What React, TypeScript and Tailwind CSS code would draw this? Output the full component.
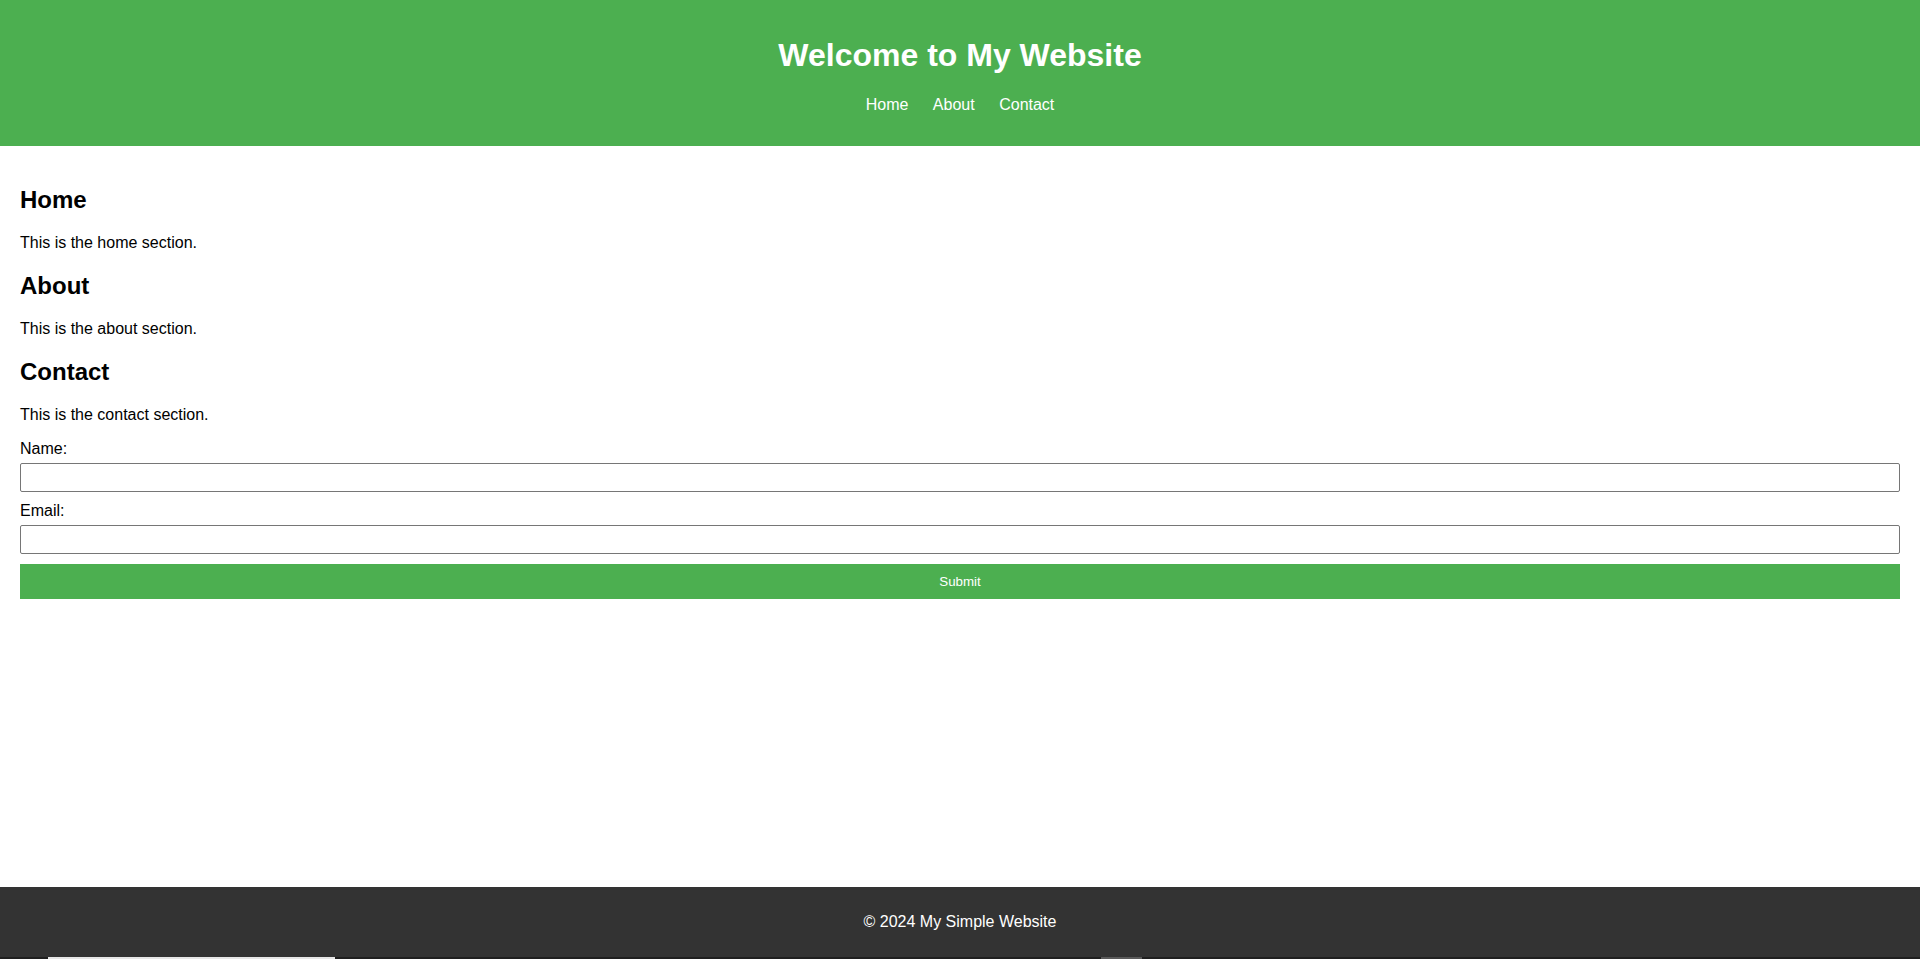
export default function App() {
  const links = ['Home', 'About', 'Contact'];

  return (
    <div className="flex min-h-[959px] flex-col bg-white font-['Liberation_Sans',Arial,sans-serif] text-[16px] leading-[normal] text-black">
      <header className="bg-[#4CAF50] px-4 pt-4 pb-4 text-center text-white">
        <h1 className="my-[21.44px] text-[32px] font-bold leading-[normal]">Welcome to My Website</h1>
        <nav>
          <ul className="mb-4 flex justify-center gap-[24.5px]">
            {links.map((l) => (
              <li key={l}>
                <a href={`#${l.toLowerCase()}`} className="text-white">
                  {l}
                </a>
              </li>
            ))}
          </ul>
        </nav>
      </header>

      <main className="flex-1 p-[20px]">
        <section id="home">
          <h2 className="my-[19.92px] text-[24px] font-bold leading-[normal]">Home</h2>
          <p className="my-4">This is the home section.</p>
        </section>
        <section id="about">
          <h2 className="my-[19.92px] text-[24px] font-bold leading-[normal]">About</h2>
          <p className="my-4">This is the about section.</p>
        </section>
        <section id="contact">
          <h2 className="mt-[20.5px] mb-[19.92px] text-[24px] font-bold leading-[normal]">Contact</h2>
          <p className="my-4">This is the contact section.</p>
          <form onSubmit={(e) => e.preventDefault()}>
            <label htmlFor="name" className="mb-[5px] block">Name:</label>
            <input id="name" type="text" className="mb-[10px] block h-[29px] w-full rounded-[2px] border border-[#767676] px-2 text-[13.33px]" />
            <label htmlFor="email" className="mb-[5px] block">Email:</label>
            <input id="email" type="email" className="mb-[10px] block h-[29px] w-full rounded-[2px] border border-[#767676] px-2 text-[13.33px]" />
            <button type="submit" className="block w-full bg-[#4CAF50] py-[10px] text-[13.33px] leading-[normal] text-white">
              Submit
            </button>
          </form>
        </section>
      </main>

      <footer className="h-[70px] bg-[#333333] pt-[26px] text-center text-white">
        <p>© 2024 My Simple Website</p>
      </footer>
      <div className="flex h-[2px] bg-[#1f1f1f]">
        <div className="w-[48px]" />
        <div className="w-[287px] bg-[#e6e6e6]" />
        <div className="w-[766px]" />
        <div className="w-[41px] bg-[#5a5a5a]" />
      </div>
    </div>
  );
}
